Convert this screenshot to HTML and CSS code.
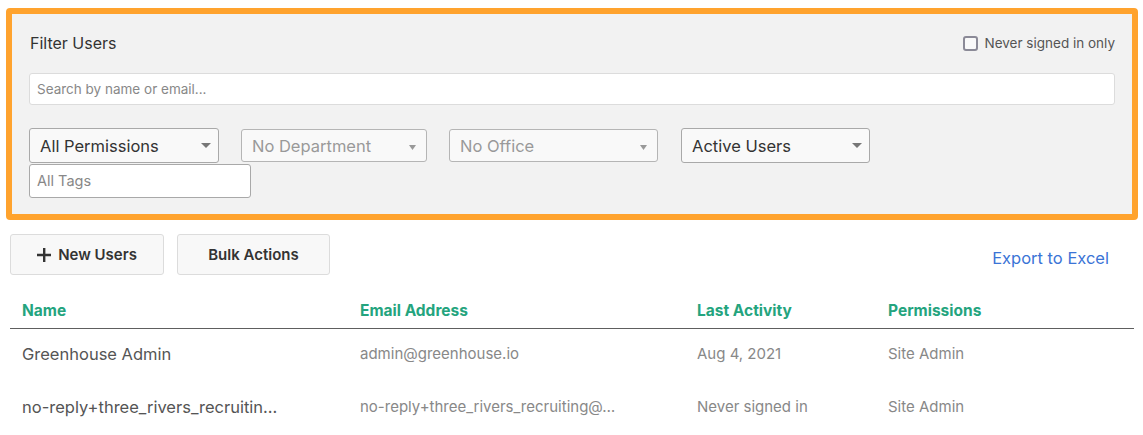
FILE: index.html
```html
<!DOCTYPE html>
<html>

<head>
    <title>Users</title>
    <meta charset="UTF-8">
    <link rel="stylesheet" href="styles.css">
</head>

<body>
    <div class="filter-panel">
        <div class="filter-top">
            <span class="filter-title">Filter Users</span>
            <label class="never-signed"><span class="checkbox"></span>Never signed in only</label>
        </div>
        <div class="search-box">Search by name or email...</div>
        <div class="select-row">
            <div class="select select-perm">All Permissions
                <svg class="arrow" width="10" height="5" viewBox="0 0 10 5"><path d="M0 0h10L5 5z"/></svg>
            </div>
            <div class="select select-dept muted">No Department
                <svg class="arrow small" width="7" height="5" viewBox="0 0 7 5"><path d="M0 0h7L3.5 5z"/></svg>
            </div>
            <div class="select select-office muted">No Office
                <svg class="arrow small" width="7" height="5" viewBox="0 0 7 5"><path d="M0 0h7L3.5 5z"/></svg>
            </div>
            <div class="select select-active">Active Users
                <svg class="arrow" width="10" height="5" viewBox="0 0 10 5"><path d="M0 0h10L5 5z"/></svg>
            </div>
        </div>
        <div class="tags-box">All Tags</div>
    </div>

    <div class="actions">
        <div class="button new-users">
            <svg width="14" height="14" viewBox="0 0 14 14"><path d="M6 0h2.4v14H6zM0 5.8h14v2.4H0z"/></svg>
            New Users
        </div>
        <div class="button bulk">Bulk Actions</div>
        <a class="export" href="#">Export to Excel</a>
    </div>

    <table class="users">
        <colgroup>
            <col class="col-name">
            <col class="col-email">
            <col class="col-activity">
            <col>
        </colgroup>
        <tr>
            <th>Name</th>
            <th>Email Address</th>
            <th>Last Activity</th>
            <th>Permissions</th>
        </tr>
        <tr>
            <td class="name">Greenhouse Admin</td>
            <td>admin@greenhouse.io</td>
            <td>Aug 4, 2021</td>
            <td>Site Admin</td>
        </tr>
        <tr>
            <td class="name">no-reply+three_rivers_recruitin…</td>
            <td>no-reply+three_rivers_recruiting@…</td>
            <td>Never signed in</td>
            <td>Site Admin</td>
        </tr>
    </table>
</body>

</html>
```

FILE: styles.css
```css
body {
    margin: 0;
    font-family: "Inter", "Liberation Sans", sans-serif;
    color: #333;
    background: #fff;
}

.filter-panel {
    margin: 8px 5px 0 6px;
    border: 6px solid #ffa32e;
    border-radius: 4px;
    background: #f2f2f2;
    padding: 20px 17px 16px 17px;
}

.filter-top {
    display: flex;
    justify-content: space-between;
    align-items: center;
    height: 18px;
    padding-left: 1px;
}

.filter-title {
    font-size: 16px;
    color: #333;
}

.never-signed {
    display: flex;
    align-items: center;
    font-size: 13.5px;
    color: #555;
}

.checkbox {
    width: 11px;
    height: 11px;
    border: 2px solid #8b8a97;
    border-radius: 3px;
    background: #f9f9f9;
    margin-right: 7px;
}

.search-box {
    margin-top: 21px;
    height: 30px;
    line-height: 30px;
    background: #fff;
    border: 1px solid #dcdcdc;
    border-radius: 3px;
    padding-left: 7px;
    font-size: 13.5px;
    color: #888;
}

.select-row {
    display: flex;
    gap: 22px;
    margin-top: 23px;
    padding-left: 1px;
}

.select {
    position: relative;
    height: 33px;
    line-height: 35px;
    border: 1px solid #a9a9a9;
    border-radius: 3px;
    background: #f9f9f9;
    padding-left: 10px;
    font-size: 16.5px;
    color: #333;
}

.select.muted {
    border-color: #b5b5b5;
    color: #999;
    height: 31px;
    line-height: 33px;
    margin-top: 1px;
}

.select-perm { width: 178px; margin-left: -1px; }
.select-dept { width: 174px; }
.select-office { width: 197px; }
.select-active { width: 177px; margin-left: 1px; }

.arrow {
    position: absolute;
    right: 7px;
    top: 14px;
    fill: #777;
}

.arrow.small {
    right: 10px;
    top: 15px;
    fill: #999;
}

.tags-box {
    width: 213px;
    height: 32px;
    line-height: 32px;
    margin-top: 1px;
    background: #fff;
    border: 1px solid #a9a9a9;
    border-radius: 3px;
    padding-left: 7px;
    font-size: 14.5px;
    color: #888;
}

.actions {
    display: flex;
    align-items: center;
    gap: 13px;
    margin: 14px 34px 0 10px;
}

.button {
    display: flex;
    align-items: center;
    justify-content: center;
    gap: 7px;
    height: 39px;
    border: 1px solid #dcdcdc;
    border-radius: 3px;
    background: #f8f8f8;
    font-size: 15px;
    font-weight: 600;
    color: #333;
}

.button svg {
    fill: #333;
}

.new-users { width: 152px; }
.bulk { width: 151px; }

.export {
    margin-left: auto;
    margin-top: 7px;
    font-size: 16.5px;
    color: #3b74d6;
    text-decoration: none;
}

.users {
    margin: 18px 9px 0 10px;
    width: calc(100% - 19px);
    border-collapse: collapse;
    table-layout: fixed;
}

.col-name { width: 338px; }
.col-email { width: 337px; }
.col-activity { width: 191px; }

.users th {
    text-align: left;
    font-size: 15.5px;
    font-weight: 700;
    color: #24a47e;
    padding: 9px 12px 8px 12px;
    line-height: 18px;
    border-bottom: 1px solid #5e5e5e;
}

.users td {
    height: 53px;
    padding: 16px 12px 0 12px;
    box-sizing: border-box;
    vertical-align: top;
    line-height: 18px;
    font-size: 15px;
    color: #888;
    white-space: nowrap;
    overflow: hidden;
}

.users td.name {
    font-size: 16.5px;
    color: #555;
}
```
